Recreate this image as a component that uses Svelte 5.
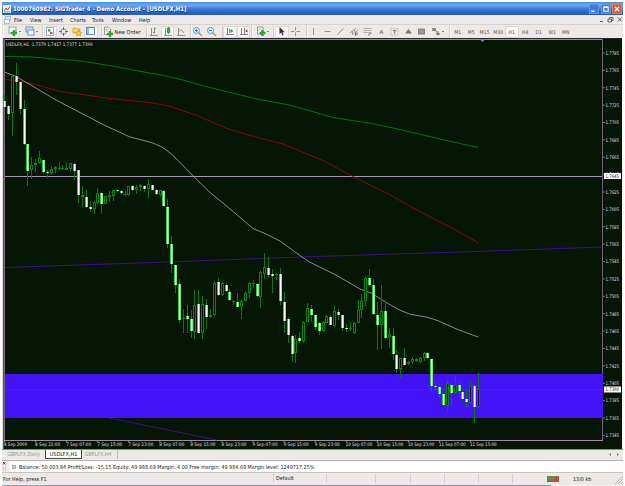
<script lang="ts">
	const menus = [
		{ label: 'File', width: 16 },
		{ label: 'View', width: 19 },
		{ label: 'Insert', width: 21 },
		{ label: 'Charts', width: 22 },
		{ label: 'Tools', width: 20 },
		{ label: 'Window', width: 27 },
		{ label: 'Help', width: 16 }
	];

	const icons = {
		newChart:
			'<rect x="1" y="1" width="7" height="6" fill="#fff" stroke="#99a"/><path d="M6 4v6M3 7h6" stroke="#2aa532" stroke-width="2.6"/>',
		profiles:
			'<rect x="1" y="1" width="7" height="5" fill="#cfe3fa" stroke="#6d93c8"/><rect x="3" y="4" width="6" height="5" fill="#fff" stroke="#6d93c8"/>',
		market:
			'<rect x="1.500" y="1.500" width="7" height="8" fill="#fff" stroke="#8fb0dc"/><path d="M3 3.500h2.500v2H3z" fill="#1a9c2a"/><path d="M5 6h2.500v2H5z" fill="#e04322"/>',
		target:
			'<circle cx="5.500" cy="5.500" r="2.700" fill="none" stroke="#777" stroke-width=".8"/><path d="M5.500 1v3M5.500 7v3M1 5.500h3M7 5.500h3" stroke="#666" stroke-width=".9"/>',
		folder:
			'<path d="M1 2h3l1 1h3v4H1z" fill="#f8d96b" stroke="#c79518" stroke-width=".7"/><path d="M6.500 4l1.200 2 2.300.3-1.700 1.500.4 2.200-2.200-1-2 1 .4-2.200L3 6.300l2.400-.3z" fill="#ffc52e" stroke="#b98212" stroke-width=".5"/>',
		panel:
			'<rect x="1.500" y="1.500" width="8" height="7" fill="#fff" stroke="#5a86cc"/><path d="M2 2h2v6H2z" fill="#8db6ee"/>',
		order:
			'<path d="M1.500 1h4l2 2v5.500h-6z" fill="#fff" stroke="#777" stroke-width=".7"/><path d="M2.500 3.500h3M2.500 5h3" stroke="#888" stroke-width=".6"/><path d="M7 5v6M4 8h6" stroke="#2aa532" stroke-width="2.300"/>',
		bars: '<path d="M2 9.500h8M3.500 2v7.500" fill="none" stroke="#777" stroke-width=".8"/><path d="M6.500 1.500v6M5 6.500h1.500M6.500 2.500H8" fill="none" stroke="#4d9158" stroke-width=".8"/>',
		candles:
			'<path d="M2 9.500h8M3.500 2v7.500" fill="none" stroke="#777" stroke-width=".8"/><path d="M6.500 1v7" stroke="#178a24" stroke-width=".8"/><rect x="5.300" y="2" width="2.600" height="4.500" fill="#2db53c" stroke="#178a24" stroke-width=".6"/>',
		line: '<path d="M2 9.500h8M3.500 2v7.500" fill="none" stroke="#777" stroke-width=".8"/><path d="M3.500 6c2-3 3-2.500 5.500 1" fill="none" stroke="#5b9565" stroke-width=".8"/>',
		zoomIn:
			'<path d="M6.500 6.500L10 10" stroke="#c99a3d" stroke-width="1.600"/><circle cx="4.500" cy="4.500" r="3" fill="#d8ebff" stroke="#5e95d8"/><path d="M3 4.500h3M4.500 3v3" stroke="#2a5fb0" stroke-width=".8"/>',
		zoomOut:
			'<path d="M6.500 6.500L10 10" stroke="#c99a3d" stroke-width="1.600"/><circle cx="4.500" cy="4.500" r="3" fill="#d8ebff" stroke="#5e95d8"/><path d="M3 4.500h3" stroke="#2a5fb0" stroke-width=".8"/>',
		scroll:
			'<path d="M2 8.500h8M3.500 2v6.500M5.500 3v4" fill="none" stroke="#666" stroke-width=".8"/><path d="M6.500 3l3 2-3 2z" fill="#25a035"/>',
		shift:
			'<path d="M2 8.500h8M3.500 2v6.500M6.500 2v6" fill="none" stroke="#666" stroke-width=".8"/><path d="M9.500 3.500v3L7 5z" fill="#b0303a"/>',
		indicators:
			'<path d="M1.500 1h5.500v7h-5.500z" fill="#fff" stroke="#777" stroke-width=".7"/><path d="M2.500 5c1-3 2-2 3-2" fill="none" stroke="#777" stroke-width=".6"/><path d="M6.500 4v6M3.500 7h6" stroke="#2aa532" stroke-width="2.400"/>',
		cursor: '<path d="M3.500 1v7l1.700-1.500L6.500 9.500l1.200-.6L6.500 6.200h2.300z" fill="#333"/>',
		cross: '<path d="M5.500 1v3.500M5.500 6.500V10M1 5.500h3.500M6.500 5.500H10" stroke="#888" stroke-width=".9"/>',
		vline: '<path d="M5.500 2v7" stroke="#888" stroke-width=".9"/>',
		hline: '<path d="M2.500 5.500h6" stroke="#888" stroke-width=".9"/>',
		trend: '<path d="M2.500 8.500l6-6" stroke="#888" stroke-width=".9"/>',
		channel:
			'<path d="M1 7l6-5M3 9l6-5M3 5l1 3M5 3.500l1.500 3.500" stroke="#888" stroke-width=".8"/><path d="M6.500 10V7H9M6.500 8.500h2" fill="none" stroke="#666" stroke-width=".8"/>',
		fibo: '<path d="M1.500 2.500h8M1.500 4.500h8M1.500 6.500h8" stroke="#999" stroke-width=".7"/><path d="M7 10V7.500h2.500" fill="none" stroke="#777" stroke-width=".8"/>',
		letter:
			'<text x="5.500" y="8" text-anchor="middle" font-family="Liberation Sans, sans-serif" font-weight="bold" font-size="6" fill="#777">A</text>',
		label:
			'<rect x="2" y="2.500" width="7" height="7" fill="none" stroke="#aaa" stroke-width=".7" stroke-dasharray="1 .6"/><text x="5.500" y="8.200" text-anchor="middle" font-family="Liberation Sans, sans-serif" font-weight="bold" font-size="6" fill="#777">T</text>',
		triangle: '<path d="M5.500 3L9 7.500H2z" fill="#777"/>',
		rect: '<rect x="2.500" y="3" width="6" height="5" fill="#999" stroke="#777" stroke-width=".8"/>',
		arrows:
			'<path d="M1.500 2.500h3v2h-3zM5 7.500h4L7 9.500z" fill="#888" stroke="#666" stroke-width=".6"/><path d="M4 4l3 3.500M7 5v3" stroke="#777" stroke-width=".9"/>'
	};

	const groups = [
		{ width: 39.5, pad: 3, items: [{ icon: 'newChart', caret: true }, { icon: 'profiles', caret: true }] },
		{
			width: 59.5,
			pad: 1,
			items: [{ icon: 'market', on: true }, { icon: 'target' }, { icon: 'folder' }, { icon: 'panel', on: true }]
		},
		{ width: 45, pad: 0, items: [{ icon: 'order' }], text: 'New Order' },
		{ width: 44, pad: 0, items: [{ icon: 'bars' }, { icon: 'candles', on: true }, { icon: 'line' }] },
		{ width: 32, pad: 0, items: [{ icon: 'zoomIn' }, { icon: 'zoomOut' }] },
		{ width: 29, pad: 0, items: [{ icon: 'scroll', on: true }, { icon: 'shift', on: true }] },
		{ width: 22, pad: 2, items: [{ icon: 'indicators', caret: true }] },
		{ width: 33, pad: 1, items: [{ icon: 'cursor', on: true }, { icon: 'cross' }] },
		{
			width: 143,
			pad: 0,
			items: [
				{ icon: 'vline' },
				{ icon: 'hline' },
				{ icon: 'trend' },
				{ icon: 'channel' },
				{ icon: 'fibo' },
				{ icon: 'letter' },
				{ icon: 'label' },
				{ icon: 'triangle' },
				{ icon: 'rect' },
				{ icon: 'arrows', caret: true }
			]
		}
	];

	const periods = ['M1', 'M5', 'M15', 'M30', 'H1', 'H4', 'D1', 'W1', 'MN'];

	// high, body top, body bottom, low, filled
	const candles = [
		[95, 101, 107, 107, 1], [105, 106, 114, 120, 1], [74, 76, 113, 136, 0], [63, 76, 82, 95, 1],
		[82, 82, 109, 114, 1], [100, 109, 144, 145, 1], [144, 144, 171, 186, 1], [157, 165, 170, 179, 0],
		[159, 163, 165, 172, 0], [151, 158, 163, 164, 0], [160, 160, 172, 174, 1], [170, 172, 173, 178, 1],
		[166, 169, 173, 175, 0], [166, 167, 169, 173, 0], [162, 168, 169, 170, 0], [165, 168, 169, 170, 0],
		[162, 168, 170, 170, 0], [163, 163, 169, 171, 0], [163, 164, 171, 180, 1], [170, 170, 195, 203, 1],
		[186, 195, 197, 207, 0], [190, 197, 207, 208, 1], [201, 207, 209, 212, 1], [201, 202, 209, 214, 0],
		[188, 193, 203, 204, 0], [192, 193, 204, 214, 1], [196, 196, 204, 204, 0], [191, 195, 197, 202, 0],
		[190, 190, 196, 201, 0], [189, 190, 191, 192, 1], [190, 191, 193, 195, 1], [190, 194, 195, 196, 0],
		[186, 186, 195, 196, 0], [185, 186, 190, 191, 1], [185, 187, 190, 194, 0], [184, 185, 187, 191, 0],
		[185, 186, 189, 192, 1], [179, 184, 189, 198, 0], [185, 185, 190, 191, 1], [189, 190, 194, 195, 1],
		[190, 190, 195, 197, 0], [190, 191, 206, 206, 1], [199, 207, 244, 248, 1], [236, 244, 264, 273, 1],
		[265, 265, 285, 293, 1], [279, 284, 320, 323, 1], [309, 318, 319, 333, 0], [305, 316, 319, 333, 1],
		[310, 319, 331, 338, 1], [290, 305, 332, 339, 0], [290, 304, 333, 333, 1], [296, 304, 333, 339, 0],
		[299, 305, 317, 329, 1], [309, 315, 317, 318, 0], [281, 283, 315, 316, 0], [278, 282, 295, 296, 1],
		[282, 283, 295, 296, 0], [283, 285, 291, 292, 1], [289, 292, 300, 301, 1], [300, 301, 302, 305, 0],
		[293, 302, 307, 307, 1], [300, 301, 307, 319, 0], [291, 293, 301, 301, 0], [282, 283, 293, 298, 0],
		[280, 283, 284, 288, 0], [283, 284, 296, 297, 1], [270, 272, 297, 308, 0], [253, 267, 274, 279, 0],
		[257, 268, 275, 277, 1], [269, 274, 276, 293, 1], [273, 274, 275, 280, 0], [268, 274, 301, 305, 1],
		[292, 302, 321, 333, 1], [317, 319, 335, 343, 1], [335, 336, 354, 362, 1], [335, 339, 353, 363, 0],
		[332, 338, 341, 343, 1], [321, 322, 341, 343, 0], [303, 308, 322, 322, 0], [305, 309, 315, 322, 1],
		[315, 315, 327, 330, 1], [322, 323, 331, 335, 1], [321, 322, 331, 332, 0], [315, 316, 323, 323, 0],
		[315, 317, 325, 325, 1], [306, 311, 326, 327, 0], [309, 312, 315, 320, 1], [315, 315, 328, 331, 1],
		[324, 328, 329, 332, 1], [322, 328, 329, 331, 0], [322, 323, 333, 334, 0], [300, 310, 323, 323, 0],
		[294, 301, 310, 318, 0], [277, 278, 301, 306, 0], [269, 278, 285, 287, 1], [279, 285, 314, 315, 1],
		[302, 315, 325, 350, 1], [285, 311, 325, 349, 0], [301, 311, 338, 339, 1], [328, 334, 337, 348, 0],
		[328, 336, 354, 360, 1], [350, 355, 369, 373, 1], [358, 358, 369, 378, 0], [348, 358, 365, 366, 1],
		[361, 362, 364, 365, 0], [357, 359, 362, 364, 0], [358, 359, 361, 362, 0], [357, 358, 362, 363, 0],
		[352, 353, 358, 361, 0], [352, 353, 358, 359, 1], [359, 359, 386, 392, 1], [381, 386, 387, 391, 1],
		[384, 387, 394, 398, 1], [393, 394, 405, 406, 1], [380, 383, 406, 412, 0], [384, 385, 393, 406, 1],
		[375, 385, 393, 393, 0], [382, 385, 391, 398, 1], [390, 392, 399, 401, 1], [389, 399, 402, 408, 1],
		[382, 386, 403, 404, 0], [385, 386, 407, 423, 1], [373, 389, 407, 408, 0]
	];

	const priceTicks = Array.from({ length: 23 }, (_, i) => ({
		y: 53 + i * 17.38,
		text: (1.7785 - i * 0.002).toFixed(4)
	}));

	const times = [
		'4 Sep 2009', '4 Sep 21:00', '7 Sep 07:00', '7 Sep 15:00', '7 Sep 23:00', '8 Sep 07:00',
		'8 Sep 15:00', '8 Sep 23:00', '9 Sep 07:00', '9 Sep 15:00', '9 Sep 23:00', '10 Sep 07:00',
		'10 Sep 15:00', '10 Sep 23:00', '11 Sep 07:00', '11 Sep 15:00'
	];

	const cellWidths = [53, 49, 35, 34, 34, 34, 34];
</script>

<div class="window">
	<div class="title">
		<svg class="app-icon" width="8" height="8" viewBox="0 0 8 8">
			<rect width="8" height="8" fill="#f3f3f3" />
			<path d="M1 6l2-3 1.500 2L7 1.500" fill="none" stroke="#d03a2a" />
			<path d="M1 7h6" stroke="#4a6" />
		</svg>
		<span class="title-text">1000760982: SIGTrader 4 - Demo Account - [USDLFX,H1]</span>
		<div class="win-buttons">
			<svg width="10" height="10" viewBox="0 0 9 9"><rect width="9" height="9" rx="1" fill="#3f7be0" stroke="#a9c8f5" stroke-width=".6" /><path d="M2 6.500h3" stroke="#fff" stroke-width="1.300" /></svg>
			<svg width="10" height="10" viewBox="0 0 9 9"><rect width="9" height="9" rx="1" fill="#3f7be0" stroke="#a9c8f5" stroke-width=".6" /><path d="M2.500 2.500h4v4h-4zM2.500 3h4" fill="none" stroke="#fff" /></svg>
			<svg width="10" height="10" viewBox="0 0 9 9"><rect width="9" height="9" rx="1" fill="#e0542f" stroke="#f0c0b0" stroke-width=".6" /><path d="M2.500 2.500l4 4M6.500 2.500l-4 4" stroke="#fff" stroke-width="1.200" /></svg>
		</div>
	</div>

	<div class="menu">
		<svg width="8" height="8" viewBox="0 0 8 8">
			<rect x="1.500" y=".5" width="5" height="4" fill="#dcebfc" stroke="#8fb2e2" stroke-width=".8" />
			<rect x=".5" y="3.500" width="5" height="4" fill="#fff" stroke="#8fb2e2" stroke-width=".8" />
		</svg>
		<div class="menu-items">
			{#each menus as menu}
				<span style="width: {menu.width}px">{menu.label}</span>
			{/each}
		</div>
		<svg class="mdi" width="24" height="7" viewBox="0 0 24 7">
			<path d="M1 5.500h3M9 3h3.500v3H9zM10.500 3V1.500H14V4.500h-1.500M19 1.500l3.500 4M22.500 1.500l-3.500 4" fill="none" stroke="#555" stroke-width=".9" />
		</svg>
	</div>

	<div class="toolbar">
		{#each groups as group}
			<div class="group" style="width: {group.width}px; padding-left: {group.pad}px">
				{#each group.items as item}
					<span class="tool" class:on={item.on} class:wide={item.caret}>
						<svg width="11" height="11" viewBox="0 0 11 11">{@html icons[item.icon]}</svg>
						{#if item.caret}
							<i class="caret"></i>
						{/if}
					</span>
				{/each}
				{#if group.text}
					<span class="order-text">{group.text}</span>
				{/if}
			</div>
		{/each}
		<div class="group periods">
			{#each periods as period}
				<span class="tool" class:on={period === 'H1'}>{period}</span>
			{/each}
		</div>
	</div>

	<svg class="chart" width="621" height="411" viewBox="2 38 621 411">
		<rect x="2" y="38" width="621" height="411" fill="#051605" />
		<g shape-rendering="crispEdges">
			<path d="M2 38h621v1H2z" fill="#2c2433" />
			<path d="M2 38h1v411H2z" fill="#d8d4d8" />
			<path d="M3 38h1v411H3z" fill="#5c555e" />
			<path d="M4 39h599v1H4z" fill="#9a8fa0" />
			<path d="M4 39h1v402H4z" fill="#75697a" />
			<path d="M602 39h1v402h-1z" fill="#6f5f74" />
			<path d="M4 440h599v1H4z" fill="#9a8fa0" />
			<path d="M622 38h1v411h-1z" fill="#f4f2f2" />
			<path d="M5 374h598v44H5z" fill="#4213f7" />
			<path d="M5 389h598v1H5z" fill="#3a30cc" />
			<path d="M5 176h597v1H5z" fill="#a796b0" />
		</g>
		<path d="M480 39.500h5l-2.500 2.500z" fill="#7d7fd0" />

		<path class="ray" d="M5 267.500L150 262.600 310 256.700 480 251.300 602 247" />
		<path class="ray" d="M109 418L217 440" />
		<path
			class="ma green"
			d="M5 56.500L29 56.800 44 58 60 59.700 74 60.200 100 64 119 67.300 137 70.700 152 73.500 160 74.800 182 79.700 200 85 227 91.700 257 99 290 105.200 300 108 333 117.500 370 123.200 400 129.500 440 139 478 147.500"
		/>
		<path
			class="ma red"
			d="M5 79.500L16 80.500 34 84 60 91.500 80 94.200 110 98.500 130 100.500 150 102.500 170 106.300 197 115.500 227 128.500 254 136.700 283 144 323 160.500 353 176.500 390 194.700 412 207.500 450 227 478 242.700"
		/>
		<path
			class="ma pink"
			d="M5 72.300L15 76 30 84.500 55 99.500 80 112.500 104 125 130 137 152 142.700 163 147.500 172 154.500 194 176.700 210 192.500 227 206.300 253 228.500 265 233.500 280 241 302 257 310 262.300 335 274.500 360 289 372 293.500 387 303 400 310.200 410 314.200 427 317.200 438 320.700 457 329.200 478 337"
		/>

		<g shape-rendering="crispEdges">
			{#each candles as [high, top, bottom, low, filled], i}
				{@const x = Math.round(4.2 + i * 3.883)}
				<rect {x} y={high} width="1" height={low - high} fill="#087a0d" />
				{#if filled}
					<rect x={x - 1} y={top} width="3" height={Math.max(1, bottom - top)} fill="#27d334" />
					<rect {x} y={top} width="1" height={Math.max(1, bottom - top)} fill="#fff" />
					<rect x={x + 1} y={top} width="1" height={Math.max(1, bottom - top)} fill="#7be884" />
				{:else}
					<rect x={x - 1} y={top} width="3" height={Math.max(1, bottom - top)} fill="#08870e" />
					{#if bottom - top > 2}
						<rect {x} y={top + 1} width="1" height={bottom - top - 2} fill="#051605" />
					{/if}
				{/if}
			{/each}
		</g>

		<g class="axis">
			{#each priceTicks as tick}
				<path d="M603 {tick.y}h2" stroke="#a79dab" stroke-width=".7" />
				<text x="605.500" y={tick.y + 1.8} textLength="13.500" lengthAdjust="spacingAndGlyphs">{tick.text}</text>
			{/each}
			<rect x="604" y="173" width="17" height="6" fill="#fff" />
			<text class="dark" x="605.500" y="177.900" textLength="13.500" lengthAdjust="spacingAndGlyphs">1.7645</text>
			<rect x="604" y="386.500" width="17" height="6" fill="#fff" />
			<text class="dark" x="605.500" y="391.400" textLength="13.500" lengthAdjust="spacingAndGlyphs">1.7390</text>
			{#each times as time, i}
				<path d="M{4.5 + i * 31.07} 440v2.500" stroke="#a79dab" stroke-width=".8" />
				<text x={4 + i * 31.07} y="446.400" textLength={i ? (i > 10 ? 26.5 : 25) : 23} lengthAdjust="spacingAndGlyphs">{time}</text>
			{/each}
			<text x="6" y="45.500" textLength="86.500" lengthAdjust="spacingAndGlyphs">USDLFX,H1  1.7379 1.7417 1.7377 1.7390</text>
		</g>
	</svg>

	<div class="tabs">
		<span class="tab daily">GBPLFX,Daily</span>
		<span class="tab active">USDLFX,H1</span>
		<span class="tab last">GBPLFX,H4</span>
		<svg class="tab-arrows" width="12" height="5" viewBox="0 0 12 5">
			<path d="M3 .8v3.400L1 2.500zM9 .8v3.400l2-1.700z" fill="#888" />
		</svg>
	</div>

	<div class="terminal">
		<div class="grip">
			<svg width="5" height="10" viewBox="0 0 5 10"><path d="M1 1l2.500 2.500M3.500 1L1 3.500" stroke="#333" stroke-width=".9" /><path d="M1.500 5.500v4M3.500 5.500v4" stroke="#bbb" stroke-width=".7" /></svg>
		</div>
		<svg class="dot" width="4" height="4" viewBox="0 0 4 4"><rect x=".5" y=".5" width="3" height="3" fill="#ccc" stroke="#999" stroke-width=".7" /></svg>
		<span class="balance">Balance: 50 003.84 Profit/Loss: -15.15 Equity: 49 988.69 Margin: 4.00 Free margin: 49 984.69 Margin level: 1249717.25%</span>
	</div>

	<div class="status">
		<span class="help">For Help, press F1</span>
		{#each cellWidths as width, i}
			<span class="cell" style="width: {width}px">{i === 0 ? 'Default' : ''}</span>
		{/each}
		<svg class="signal" width="12" height="6" viewBox="0 0 12 6">
			<rect width="12" height="6" fill="#8d7048" />
			<path d="M1.500 0v4M3.500 0v4M5.500 0v4M7.500 0v2" stroke="#5c9c48" />
			<path d="M7.500 2v4M9.500 1v5M11.500 1v4M1 5.500h6" stroke="#b8443a" />
		</svg>
		<span class="traffic">13/0 kb</span>
		<svg class="resize" width="8" height="8" viewBox="0 0 8 8"><path d="M0 8l8-8M3 8l5-5M6 8l2-2" stroke="#aaa" stroke-width=".8" /></svg>
	</div>
	<div class="taskbar"></div>
</div>

<style>
	:global(body) {
		background: #fff;
		overflow: hidden;
	}

	.window {
		box-sizing: border-box;
		width: 625px;
		height: 486px;
		padding: 2px 2px 0;
		display: flex;
		flex-direction: column;
		font-family: 'DejaVu Sans Condensed', 'DejaVu Sans', sans-serif;
		font-size: 5.4px;
		color: #222;
		white-space: nowrap;
	}

	svg {
		display: block;
		flex: none;
	}

	.title {
		height: 13px;
		flex: none;
		display: flex;
		align-items: center;
		background: linear-gradient(#4a8de0, #67a9f1 25%, #3f80d6 50%, #2e6ac6 70%, #2858ae);
	}

	.app-icon {
		margin-left: 1px;
	}

	.title-text {
		margin-left: 2px;
		font-size: 6.05px;
		font-weight: bold;
		color: #fff;
		text-shadow: 0.5px 0.5px #123a7a;
	}

	.win-buttons {
		margin-left: auto;
		margin-right: 1px;
		display: flex;
		gap: 1.5px;
	}

	.menu {
		height: 9px;
		flex: none;
		display: flex;
		align-items: center;
		padding-left: 2px;
		background: #ece9e6;
		border-bottom: 1px solid #d6d2ce;
	}

	.menu-items {
		display: flex;
		margin-left: 2px;
	}

	.menu-items span {
		flex: none;
	}

	.mdi {
		margin-left: auto;
	}

	.toolbar {
		height: 13px;
		flex: none;
		display: flex;
		background: #ece9e6;
	}

	.group {
		box-sizing: border-box;
		flex: none;
		display: flex;
		align-items: center;
		border-left: 1px solid #d4d0cd;
		box-shadow: inset 1px 0 #f8f7f5;
	}

	.group:first-child {
		border-left-color: #ece9e6;
	}

	.tool {
		box-sizing: border-box;
		width: 13.5px;
		height: 12px;
		flex: none;
		display: flex;
		align-items: center;
		justify-content: center;
	}

	.tool.wide {
		width: 17px;
	}

	.tool.on {
		background: #f8f7f7;
		border: 1px solid #dcd9db;
	}

	.caret {
		border: 1.5px solid transparent;
		border-top-color: #222;
		border-bottom: 0;
	}

	.order-text {
		margin-left: -1px;
	}

	.periods {
		width: 126px;
		padding-left: 1px;
		color: #555;
		font-size: 5.1px;
	}

	.ray {
		fill: none;
		stroke: #431093;
		stroke-width: 0.9;
	}

	.ma {
		fill: none;
		stroke-width: 0.9;
	}

	.ma.green {
		stroke: #07790b;
	}

	.ma.red {
		stroke: #960609;
	}

	.ma.pink {
		stroke: #a08da6;
	}

	.axis text {
		fill: #e2dce4;
		font-size: 4.7px;
		white-space: pre;
	}

	.axis text.dark {
		fill: #111;
	}

	.tabs {
		box-sizing: border-box;
		height: 11px;
		flex: none;
		display: flex;
		align-items: flex-start;
		background: #ece9e6;
		border-top: 1px solid #8c888c;
		color: #999;
	}

	.tab {
		box-sizing: border-box;
		height: 9px;
		line-height: 8px;
		text-align: center;
	}

	.daily {
		width: 43px;
	}

	.tab.active {
		width: 37px;
		background: #fff;
		border: 1px solid #444;
		border-top: 0;
		color: #111;
	}

	.last {
		width: 36px;
		padding-right: 3px;
		border-right: 1px solid #bbb;
	}

	.tab-arrows {
		margin: 2px 3px 0 auto;
	}

	.terminal {
		box-sizing: border-box;
		height: 13px;
		flex: none;
		display: flex;
		align-items: center;
		background: #fff;
		border-top: 1px solid #b9b5b5;
		border-bottom: 1px solid #c9c5c5;
	}

	.grip {
		width: 7px;
		height: 11px;
		background: #ece9e6;
	}

	.dot {
		margin-left: 3px;
	}

	.balance {
		margin-left: 3px;
	}

	.status {
		height: 11.5px;
		flex: none;
		display: flex;
		align-items: center;
		background: #ece9e6;
	}

	.help {
		width: 270px;
		padding-left: 1px;
	}

	.cell {
		box-sizing: border-box;
		flex: none;
		height: 9px;
		line-height: 9px;
		padding-left: 2px;
		border-left: 1px solid #d2cfce;
	}

	.signal {
		margin-left: 1px;
	}

	.traffic {
		margin-left: 14px;
	}

	.resize {
		margin: 3px 0 0 auto;
	}

	.taskbar {
		flex: 1;
		background: linear-gradient(90deg, #8fa5b8 45px, #5f9fe8 45px 549px, #f3f5f8 549px);
	}
</style>
